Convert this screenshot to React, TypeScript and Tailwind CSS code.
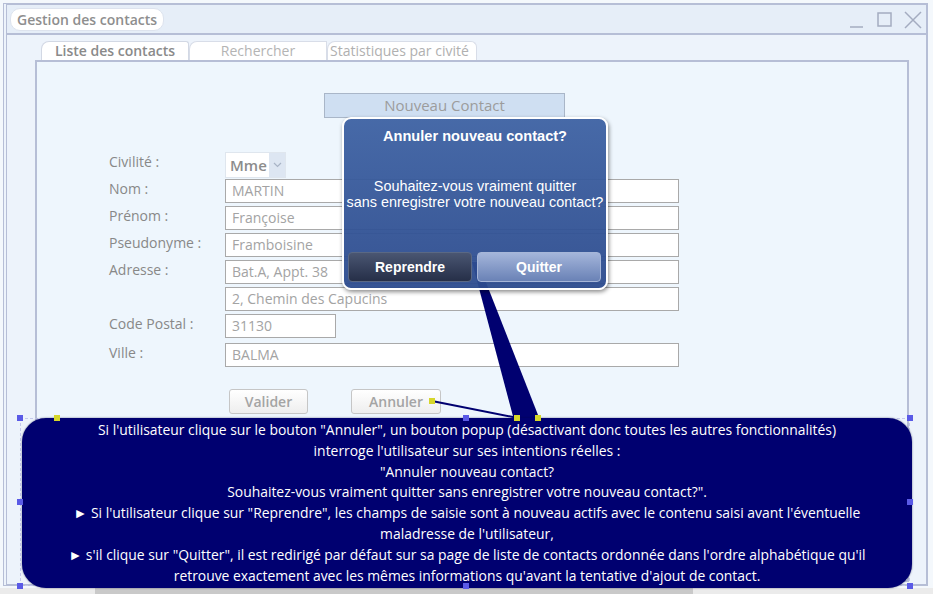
import React from "react";

const labelCls = "w-[116px] shrink-0 text-[14px] leading-[20px] text-[#888888]";
const inputCls =
  "h-[24px] border border-[#a9a9a9] bg-white px-[6px] text-[14px] leading-[22px] text-[#a3a3a3]";

const Row = ({ label, mt, children }: { label?: string; mt: string; children: React.ReactNode }) => (
  <div className={`flex items-start ${mt}`}>
    <div className={labelCls}>{label}</div>
    {children}
  </div>
);

const tipLines = [
  'Si l\'utilisateur clique sur le bouton "Annuler", un bouton popup (désactivant donc toutes les autres fonctionnalités)',
  "interroge l'utilisateur sur ses intentions réelles :",
  '"Annuler nouveau contact?',
  'Souhaitez-vous vraiment quitter sans enregistrer votre nouveau contact?".',
  '► Si l\'utilisateur clique sur "Reprendre", les champs de saisie sont à nouveau actifs avec le contenu saisi avant l\'éventuelle',
  "maladresse de l'utilisateur,",
  '► s\'il clique sur "Quitter", il est redirigé par défaut sur sa page de liste de contacts ordonnée dans l\'ordre alphabétique qu\'il',
  "retrouve exactement avec les mêmes informations qu'avant la tentative d'ajout de contact.",
];

export default function App() {
  return (
    <div className="relative h-[594px] w-[933px] overflow-hidden bg-[#f4f8fc] font-['Open_Sans',sans-serif]">
      {/* window */}
      <div className="ml-[3px] mt-[3px] h-[583px] w-[925px] border-2 border-l-4 border-double border-[#b6bed6] bg-[#edf3fb]">
        {/* title bar */}
        <div className="flex h-[30px] items-center justify-between border-b-2 border-[#b6bed6] bg-[#e6eef8] pl-[3px] pr-[4px]">
          <div className="flex h-[23px] items-center rounded-[10px] border border-[#dde3ee] bg-white px-[6px] text-[14px] font-semibold text-[#8e8e8e]">
            Gestion des contacts
          </div>
          <div className="flex items-center gap-[10px] pt-[2px]">
            <svg width="18" height="18" viewBox="0 0 18 18">
              <line x1="2" y1="16" x2="15" y2="16" stroke="#a4acc0" strokeWidth="1.5" />
            </svg>
            <svg width="18" height="18" viewBox="0 0 18 18">
              <rect x="2" y="2" width="13" height="13" fill="none" stroke="#a4acc0" strokeWidth="1.5" />
            </svg>
            <svg width="18" height="18" viewBox="0 0 18 18">
              <path d="M1 1 L17 17 M17 1 L1 17" stroke="#a4acc0" strokeWidth="1.5" />
            </svg>
          </div>
        </div>

        {/* tabs */}
        <div className="ml-[34px] mt-[6px] flex items-end text-[14px] leading-[18px]">
          <div className="w-[148px] rounded-tl-[8px] rounded-tr-[3px] border border-b-0 border-[#d2d8e4] bg-white text-center font-semibold text-[#8a8a8a]">
            Liste des contacts
          </div>
          <div className="w-[138px] rounded-tl-[8px] border border-b-0 border-[#d8dde8] bg-white text-center text-[#b4b4b4]">
            Rechercher
          </div>
          <div className="w-[150px] rounded-tl-[8px] rounded-tr-[6px] border border-b-0 border-[#d8dde8] bg-white px-[2px] text-left text-[#b0b0b0]">
            Statistiques par civité
          </div>
        </div>

        {/* content panel */}
        <div className="ml-[28px] h-[522px] w-[874px] border-2 border-[#b6bed6] bg-[#eef6fd]">
          <div className="ml-[287px] mt-[31px] h-[25px] w-[241px] border border-[#a9b6c8] bg-[#cfdff2] text-center text-[15px] leading-[23px] text-[#9c9c9c]">
            Nouveau Contact
          </div>

          <div className="ml-[72px]">
            <Row label="Civilité :" mt="mt-[34px]">
              <div className="flex h-[26px] w-[61px] items-center border border-[#dfe6ee] bg-white pl-[4px] text-[15px] font-semibold text-[#8c8c8c]">
                Mme
                <div className="ml-auto flex h-full w-[16px] items-center justify-center bg-[#dde6f2]">
                  <svg width="9" height="6" viewBox="0 0 9 6">
                    <path d="M1 1 L4.5 4.5 L8 1" fill="none" stroke="#a8b4c6" strokeWidth="1.2" />
                  </svg>
                </div>
              </div>
            </Row>
            <Row label="Nom :" mt="mt-[1px]">
              <div className={`${inputCls} w-[454px]`}>MARTIN</div>
            </Row>
            <Row label="Prénom :" mt="mt-[3px]">
              <div className={`${inputCls} w-[454px]`}>Françoise</div>
            </Row>
            <Row label="Pseudonyme :" mt="mt-[3px]">
              <div className={`${inputCls} w-[454px]`}>Framboisine</div>
            </Row>
            <Row label="Adresse :" mt="mt-[3px]">
              <div className={`${inputCls} w-[454px]`}>Bat.A, Appt. 38</div>
            </Row>
            <Row mt="mt-[3px]">
              <div className={`${inputCls} w-[454px]`}>2, Chemin des Capucins</div>
            </Row>
            <Row label="Code Postal :" mt="mt-[3px]">
              <div className={`${inputCls} w-[111px]`}>31130</div>
            </Row>
            <Row label="Ville :" mt="mt-[5px]">
              <div className={`${inputCls} w-[454px]`}>BALMA</div>
            </Row>

            <div className="ml-[120px] mt-[22px] flex gap-[43px]">
              <div className="h-[25px] w-[79px] rounded-[3px] border border-[#c6c6c6] bg-gradient-to-b from-white to-[#eeeeee] text-center text-[14px] font-semibold leading-[23px] text-[#a4a4a4]">
                Valider
              </div>
              <div className="h-[25px] w-[90px] rounded-[3px] border border-[#c6c6c6] bg-gradient-to-b from-white to-[#eeeeee] text-center text-[14px] font-semibold leading-[23px] text-[#a4a4a4]">
                Annuler
              </div>
            </div>
          </div>
        </div>
      </div>

      {/* scrollbar */}
      <div className="absolute bottom-0 left-0 h-[6px] w-full bg-[#ebebeb]">
        <div className="ml-[95px] h-full w-[598px] bg-[#c9c9c9]" />
      </div>

      {/* callout wedge + connector */}
      <svg className="absolute left-0 top-0" width="933" height="594" viewBox="0 0 933 594">
        <polygon points="472,262 478,262 540,420 514,420" fill="#000070" />
        <line x1="432" y1="401" x2="518" y2="418" stroke="#000070" strokeWidth="2" />
      </svg>

      {/* confirm popup */}
      <div className="absolute left-[342px] top-[117px] h-[173px] w-[266px] rounded-[9px] border-2 border-white bg-gradient-to-b from-[#3e62a3]/95 to-[#2c4b8e]/95 font-['Liberation_Sans',Arial,sans-serif] text-white shadow-[1px_2px_4px_rgba(0,0,0,0.45)]">
        <div className="mt-[8px] text-center text-[14.6px] font-bold leading-[18px]">Annuler nouveau contact?</div>
        <div className="mt-[33px] text-center text-[14.4px] leading-[16px]">
          Souhaitez-vous vraiment quitter
          <br />
          sans enregistrer votre nouveau contact?
        </div>
        <div className="mt-[42px] flex gap-[5px] px-[4px]">
          <div className="h-[30px] w-[124px] rounded-[4px] border border-[#5a6884] bg-gradient-to-b from-[#4a5672] to-[#262f48] text-center text-[14px] font-bold leading-[28px]">
            Reprendre
          </div>
          <div className="h-[30px] w-[124px] rounded-[4px] border border-[#a6b6d8] bg-gradient-to-b from-[#a4b5da] to-[#6a82b6] text-center text-[14px] font-bold leading-[28px]">
            Quitter
          </div>
        </div>
      </div>

      {/* selection frame */}
      <div className="absolute left-[20px] top-[418px] h-[168px] w-[890px] border border-dashed border-[#c4c8ec]" />

      {/* annotation callout */}
      <div className="absolute left-[22px] top-[418px] flex h-[170px] w-[890px] flex-col items-center rounded-[24px] bg-[#000070] pt-[2px] text-[13.9px] leading-[20.8px] text-white shadow-[0_0_2px_rgba(0,0,60,0.6)]">
        {tipLines.map((l, i) => (
          <div key={i} className="whitespace-nowrap">
            {l}
          </div>
        ))}
      </div>

      {/* handles */}
      {[
        [17, 415],
        [463, 415],
        [907, 415],
        [17, 499],
        [907, 499],
        [17, 583],
        [463, 583],
        [907, 583],
      ].map(([x, y], i) => (
        <div key={i} className="absolute h-[6px] w-[6px] bg-[#5a5ae6]" style={{ left: x, top: y }} />
      ))}
      {[
        [429, 398],
        [514, 415],
        [535, 415],
        [54, 415],
      ].map(([x, y], i) => (
        <div key={"y" + i} className="absolute h-[6px] w-[6px] bg-[#d6d62a]" style={{ left: x, top: y }} />
      ))}
    </div>
  );
}
